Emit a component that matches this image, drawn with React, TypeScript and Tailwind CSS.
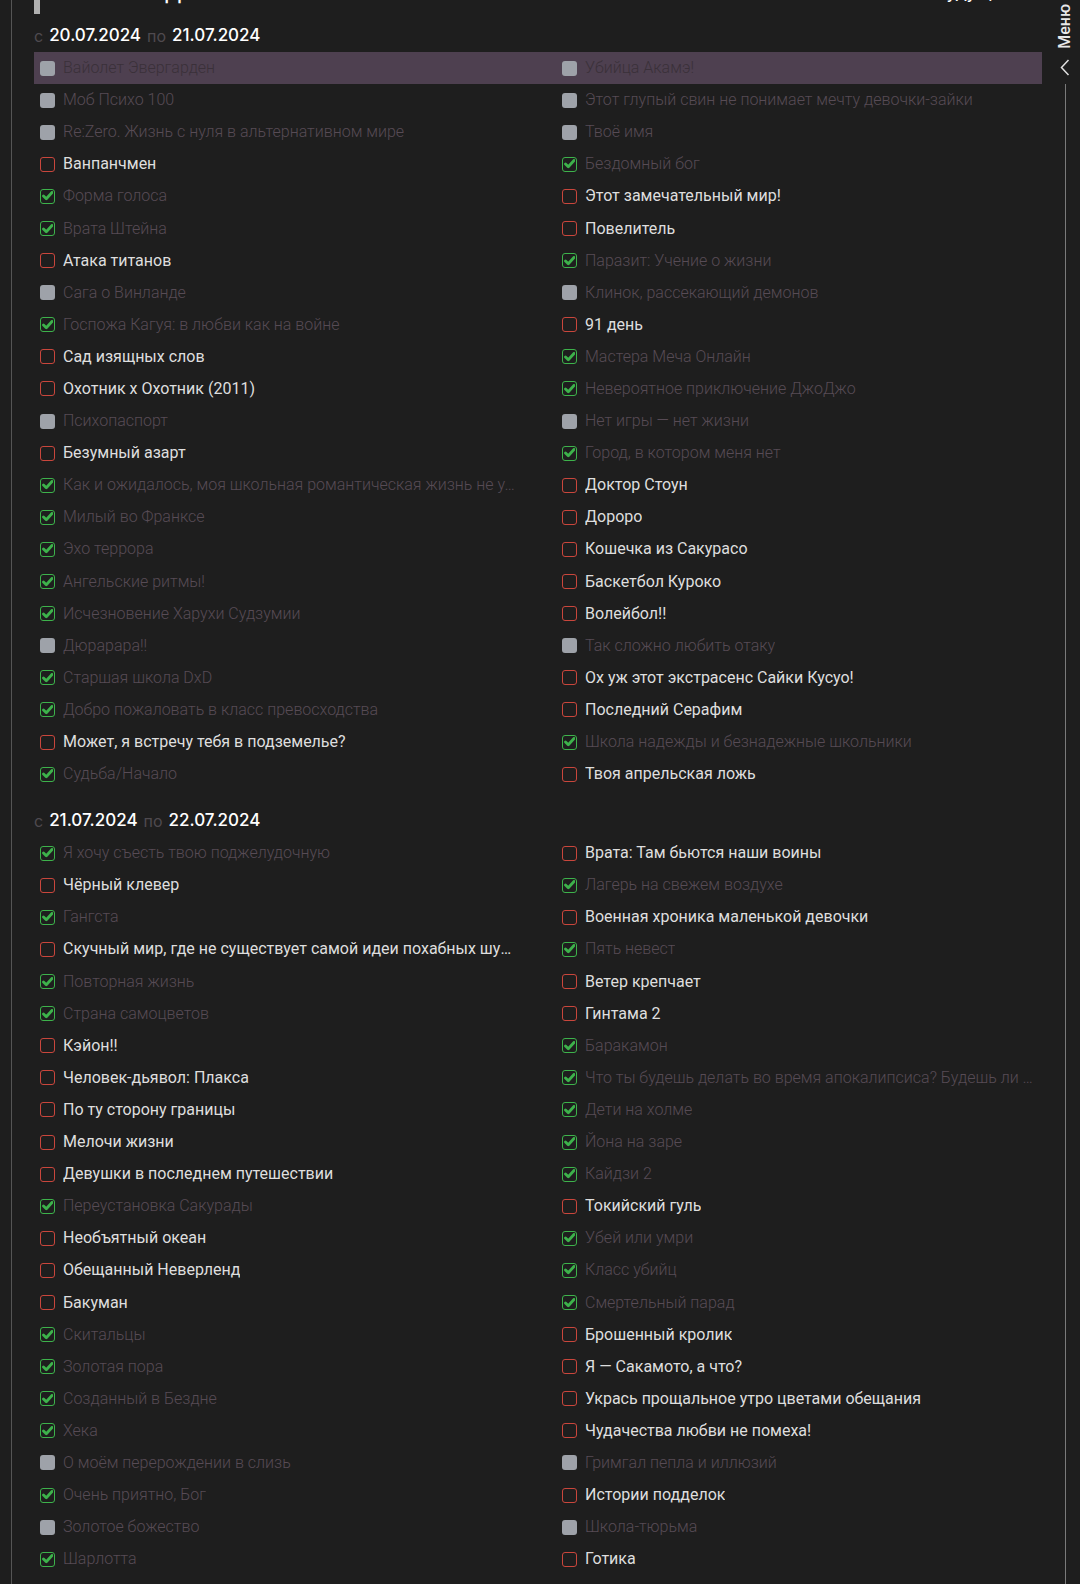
type State = "g" | "r" | "c"
type Item = [string, State]
type Row = { left: Item; right: Item; active?: boolean }

const first: Row[] = [
  { left: ["Вайолет Эвергарден", "g"], right: ["Убийца Акамэ!", "g"], active: true },
  { left: ["Моб Психо 100", "g"], right: ["Этот глупый свин не понимает мечту девочки-зайки", "g"] },
  { left: ["Re:Zero. Жизнь с нуля в альтернативном мире", "g"], right: ["Твоё имя", "g"] },
  { left: ["Ванпанчмен", "r"], right: ["Бездомный бог", "c"] },
  { left: ["Форма голоса", "c"], right: ["Этот замечательный мир!", "r"] },
  { left: ["Врата Штейна", "c"], right: ["Повелитель", "r"] },
  { left: ["Атака титанов", "r"], right: ["Паразит: Учение о жизни", "c"] },
  { left: ["Сага о Винланде", "g"], right: ["Клинок, рассекающий демонов", "g"] },
  { left: ["Госпожа Кагуя: в любви как на войне", "c"], right: ["91 день", "r"] },
  { left: ["Сад изящных слов", "r"], right: ["Мастера Меча Онлайн", "c"] },
  { left: ["Охотник х Охотник (2011)", "r"], right: ["Невероятное приключение ДжоДжо", "c"] },
  { left: ["Психопаспорт", "g"], right: ["Нет игры — нет жизни", "g"] },
  { left: ["Безумный азарт", "r"], right: ["Город, в котором меня нет", "c"] },
  { left: ["Как и ожидалось, моя школьная романтическая жизнь не удалась", "c"], right: ["Доктор Стоун", "r"] },
  { left: ["Милый во Франксе", "c"], right: ["Дороро", "r"] },
  { left: ["Эхо террора", "c"], right: ["Кошечка из Сакурасо", "r"] },
  { left: ["Ангельские ритмы!", "c"], right: ["Баскетбол Куроко", "r"] },
  { left: ["Исчезновение Харухи Судзумии", "c"], right: ["Волейбол!!", "r"] },
  { left: ["Дюрарара!!", "g"], right: ["Так сложно любить отаку", "g"] },
  { left: ["Старшая школа DxD", "c"], right: ["Ох уж этот экстрасенс Сайки Кусуо!", "r"] },
  { left: ["Добро пожаловать в класс превосходства", "c"], right: ["Последний Серафим", "r"] },
  { left: ["Может, я встречу тебя в подземелье?", "r"], right: ["Школа надежды и безнадежные школьники", "c"] },
  { left: ["Судьба/Начало", "c"], right: ["Твоя апрельская ложь", "r"] },
]

const second: Row[] = [
  { left: ["Я хочу съесть твою поджелудочную", "c"], right: ["Врата: Там бьются наши воины", "r"] },
  { left: ["Чёрный клевер", "r"], right: ["Лагерь на свежем воздухе", "c"] },
  { left: ["Гангста", "c"], right: ["Военная хроника маленькой девочки", "r"] },
  { left: ["Скучный мир, где не существует самой идеи похабных шуток", "r"], right: ["Пять невест", "c"] },
  { left: ["Повторная жизнь", "c"], right: ["Ветер крепчает", "r"] },
  { left: ["Страна самоцветов", "c"], right: ["Гинтама 2", "r"] },
  { left: ["Кэйон!!", "r"], right: ["Баракамон", "c"] },
  { left: ["Человек-дьявол: Плакса", "r"], right: ["Что ты будешь делать во время апокалипсиса? Будешь ли ты занят? Спасёшь ли нас?", "c"] },
  { left: ["По ту сторону границы", "r"], right: ["Дети на холме", "c"] },
  { left: ["Мелочи жизни", "r"], right: ["Йона на заре", "c"] },
  { left: ["Девушки в последнем путешествии", "r"], right: ["Кайдзи 2", "c"] },
  { left: ["Переустановка Сакурады", "c"], right: ["Токийский гуль", "r"] },
  { left: ["Необъятный океан", "r"], right: ["Убей или умри", "c"] },
  { left: ["Обещанный Неверленд", "r"], right: ["Класс убийц", "c"] },
  { left: ["Бакуман", "r"], right: ["Смертельный парад", "c"] },
  { left: ["Скитальцы", "c"], right: ["Брошенный кролик", "r"] },
  { left: ["Золотая пора", "c"], right: ["Я — Сакамото, а что?", "r"] },
  { left: ["Созданный в Бездне", "c"], right: ["Укрась прощальное утро цветами обещания", "r"] },
  { left: ["Хека", "c"], right: ["Чудачества любви не помеха!", "r"] },
  { left: ["О моём перерождении в слизь", "g"], right: ["Гримгал пепла и иллюзий", "g"] },
  { left: ["Очень приятно, Бог", "c"], right: ["Истории подделок", "r"] },
  { left: ["Золотое божество", "g"], right: ["Школа-тюрьма", "g"] },
  { left: ["Шарлотта", "c"], right: ["Готика", "r"] },
]

function Box({ state }: { state: State }) {
  if (state === "g") return <div className="w-[15px] h-[15px] shrink-0 rounded-[3px] bg-[#9ea2a9]"></div>
  if (state === "r") return <div className="w-[15px] h-[15px] shrink-0 rounded-[3px] border-[1.5px] border-[#c9463c]"></div>
  return (
    <div className="w-[15px] h-[15px] shrink-0 rounded-[3px] border-[1.5px] border-[#3db24b] flex items-center justify-center">
      <svg width="11" height="10" viewBox="0 0 11 10">
        <path d="M1.5 5 L4.3 7.8 L10 1.4" fill="none" stroke="#3db24b" strokeWidth="2.8" strokeLinecap="round" strokeLinejoin="round" />
      </svg>
    </div>
  )
}

function Cell({ item, active }: { item: Item; active?: boolean }) {
  const [title, state] = item
  const color = active
    ? "text-[#3a3039] font-light"
    : state === "r"
      ? "text-[#dedede] font-normal"
      : "text-[#574b55] font-light"
  return (
    <div className="flex items-center gap-2 pl-[6px] min-w-0">
      <Box state={state} />
      <span className={`truncate text-[16px] leading-[20px] ${color}`}>{title}</span>
    </div>
  )
}

function DateLine({ from, to, extra }: { from: string; to: string; extra?: string }) {
  return (
    <div className={`flex items-center h-[32px] gap-[6px] [font-family:Inter,sans-serif] ${extra ?? ""}`}>
      <span className="text-[16px] text-[#4f4a4f]">с</span>
      <span className="text-[17px] font-medium text-white">{from}</span>
      <span className="text-[16px] text-[#4f4a4f]">по</span>
      <span className="text-[17px] font-medium text-white">{to}</span>
    </div>
  )
}

function List({ rows }: { rows: Row[] }) {
  return (
    <div className="flex flex-col">
      {rows.map((row, i) => (
        <div
          key={i}
          className={`grid grid-cols-2 gap-x-[38px] pr-[2px] h-[32.1px] items-center ${row.active ? "bg-[#4e4050]" : ""}`}
        >
          <Cell item={row.left} active={row.active} />
          <Cell item={row.right} active={row.active} />
        </div>
      ))}
    </div>
  )
}

export default function App() {
  return (
    <div className="h-[1584px] w-[1080px] overflow-hidden bg-[#1e1e1e] flex [font-family:Roboto,'Noto_Sans',sans-serif]">
      <div className="w-[12px] shrink-0 border-r border-[#555555]"></div>

      <div className="w-[1008px] ml-[22px] flex flex-col">
        <div className="flex items-start justify-between -mt-[21px] h-[35px] pr-[30px]">
          <div className="h-[35px] border-l-[6px] border-[#b0b0b0] pl-[10px]">
            <p className="text-[20px] leading-[28px] font-medium text-white [font-family:Inter,sans-serif] tracking-wide">В ЭТОМ ГОДУ</p>
          </div>
          <p className="text-[19px] leading-[26px] text-white">Будущее</p>
        </div>

        <DateLine from="20.07.2024" to="21.07.2024" extra="mt-[6px]" />
        <List rows={first} />

        <DateLine from="21.07.2024" to="22.07.2024" extra="mt-[15px]" />
        <List rows={second} />
      </div>

      <div className="flex-1 pl-[16px]">
        <div className="w-[14px] h-full flex flex-col items-center">
          <span className="mt-[4px] text-[16px] font-medium text-[#e8e8e8] [writing-mode:vertical-rl] rotate-180 leading-[16px]">Меню</span>
          <svg className="mt-[10px]" width="10" height="17" viewBox="0 0 10 17">
            <path d="M8.5 1 L1.5 8.5 L8.5 16" fill="none" stroke="#e0e0e0" strokeWidth="1.5" />
          </svg>
          <div className="mt-[8px] flex-1 w-px bg-[#7a7a7a]"></div>
        </div>
      </div>
    </div>
  )
}
